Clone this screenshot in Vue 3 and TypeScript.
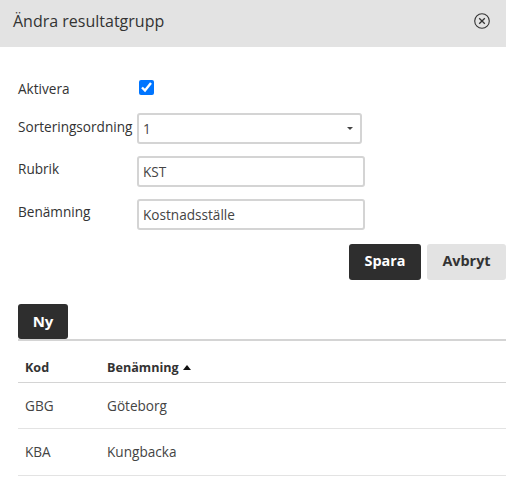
<script setup lang="ts">
const rows = [
  { kod: 'GBG', namn: 'Göteborg' },
  { kod: 'KBA', namn: 'Kungbacka' },
]
</script>

<template>
  <div class="dialog">
    <header class="dialog-head">
      <h1>Ändra resultatgrupp</h1>
      <button class="close" type="button" aria-label="Stäng">
        <svg width="16" height="16" viewBox="0 0 16 16" fill="none" stroke="#333" stroke-width="1.1">
          <circle cx="8" cy="8" r="7.3" />
          <path d="M5.2 5.2l5.6 5.6M10.8 5.2l-5.6 5.6" stroke-width="1.3" />
        </svg>
      </button>
    </header>

    <form class="form" @submit.prevent>
      <div class="row row--check">
        <label>Aktivera</label>
        <input type="checkbox" checked />
      </div>
      <div class="row row--select">
        <label>Sorteringsordning</label>
        <div class="select">
          <span>1</span>
          <i class="caret" />
        </div>
      </div>
      <div class="row row--text">
        <label>Rubrik</label>
        <input type="text" value="KST" />
      </div>
      <div class="row row--text">
        <label>Benämning</label>
        <input type="text" value="Kostnadsställe" />
      </div>
      <div class="actions">
        <button class="btn btn--dark" type="submit">Spara</button>
        <button class="btn btn--light" type="button">Avbryt</button>
      </div>
    </form>

    <section class="list">
      <div class="toolbar">
        <button class="btn btn--dark btn--new" type="button">Ny</button>
      </div>
      <table>
        <thead>
          <tr>
            <th class="col-kod">Kod</th>
            <th>Benämning <i class="sort" /></th>
          </tr>
        </thead>
        <tbody>
          <tr v-for="r in rows" :key="r.kod">
            <td>{{ r.kod }}</td>
            <td>{{ r.namn }}</td>
          </tr>
        </tbody>
      </table>
    </section>
  </div>
</template>

<style>
html, body { background: #fff; }
</style>

<style scoped>
.dialog {
  width: 506px;
  height: 491px;
  overflow: hidden;
  font-family: 'Open Sans', sans-serif;
  font-size: 13.6px;
  color: #333;
}
.dialog-head {
  height: 47px;
  background: #e3e3e3;
  display: flex;
  align-items: center;
  justify-content: space-between;
  padding: 0 16px 6px 13px;
  box-sizing: border-box;
}
.dialog-head h1 {
  margin: 0;
  font-size: 16px;
  font-weight: 400;
  color: #333;
}
.close {
  border: none;
  background: none;
  padding: 0;
  display: flex;
  cursor: pointer;
}

.form { padding: 0 0 0 18px; }
.row { display: flex; }
.row label { width: 119px; flex: none; }
.row--check { height: 15px; margin-top: 33px; align-items: center; }
.row--check label { margin-right: 2px; padding-top: 2px; }
.row--check input { width: 15px; height: 15px; margin: 0; accent-color: #0075ff; }
.row--select { margin-top: 18px; align-items: flex-start; }
.row--select label { line-height: 27px; }
.row--text { margin-top: 12px; }
.row--text label { line-height: 25px; }
.select {
  width: 225px;
  height: 31px;
  box-sizing: border-box;
  border: 2px solid #d4d4d4;
  border-radius: 3px;
  display: flex;
  align-items: center;
  justify-content: space-between;
  padding: 0 7px 0 4px;
  color: #444;
}
.caret {
  width: 0;
  height: 0;
  border-left: 3px solid transparent;
  border-right: 3px solid transparent;
  border-top: 3px solid #444;
}
.row--text input {
  width: 228px;
  height: 31px;
  box-sizing: border-box;
  border: 2px solid #d4d4d4;
  border-radius: 3px;
  padding: 0 4px;
  margin: 0;
  font: inherit;
  color: #444;
  outline: none;
}
.actions {
  display: flex;
  justify-content: flex-end;
  gap: 6px;
  margin-top: 14px;
}
.btn {
  height: 36px;
  border: none;
  border-radius: 3px;
  padding: 0 0 3px;
  font-family: inherit;
  font-size: 14.4px;
  font-weight: 700;
  cursor: pointer;
}
.btn--dark { width: 72px; background: #2e2e2e; color: #fff; }
.btn--light { width: 79px; background: #e3e3e3; color: #333; }

.list { margin: 24px 0 0 18px; }
.toolbar {
  border-bottom: 2px solid #d4d4d4;
  display: flex;
}
.btn--new { width: 50px; height: 35px; font-size: 15px; padding: 0 0 1px; }
table {
  width: 100%;
  border-collapse: collapse;
  font-size: 12.6px;
}
th {
  text-align: left;
  font-weight: 700;
  height: 41px;
  padding: 12px 0 0 7px;
  box-sizing: border-box;
  border-bottom: 1px solid #d4d4d4;
  color: #333;
}
th.col-kod { width: 82px; }
td {
  height: 46px;
  padding: 0 0 0 7px;
  box-sizing: border-box;
  border-bottom: 1px solid #e3e3e3;
  font-size: 13.6px;
  color: #444;
}
td:first-child { width: 82px; }
tr:last-child td { height: 47px; }
.sort {
  display: inline-block;
  width: 0;
  height: 0;
  margin-left: 1px;
  vertical-align: 2px;
  border-left: 4px solid transparent;
  border-right: 4px solid transparent;
  border-bottom: 5px solid #111;
}
</style>
